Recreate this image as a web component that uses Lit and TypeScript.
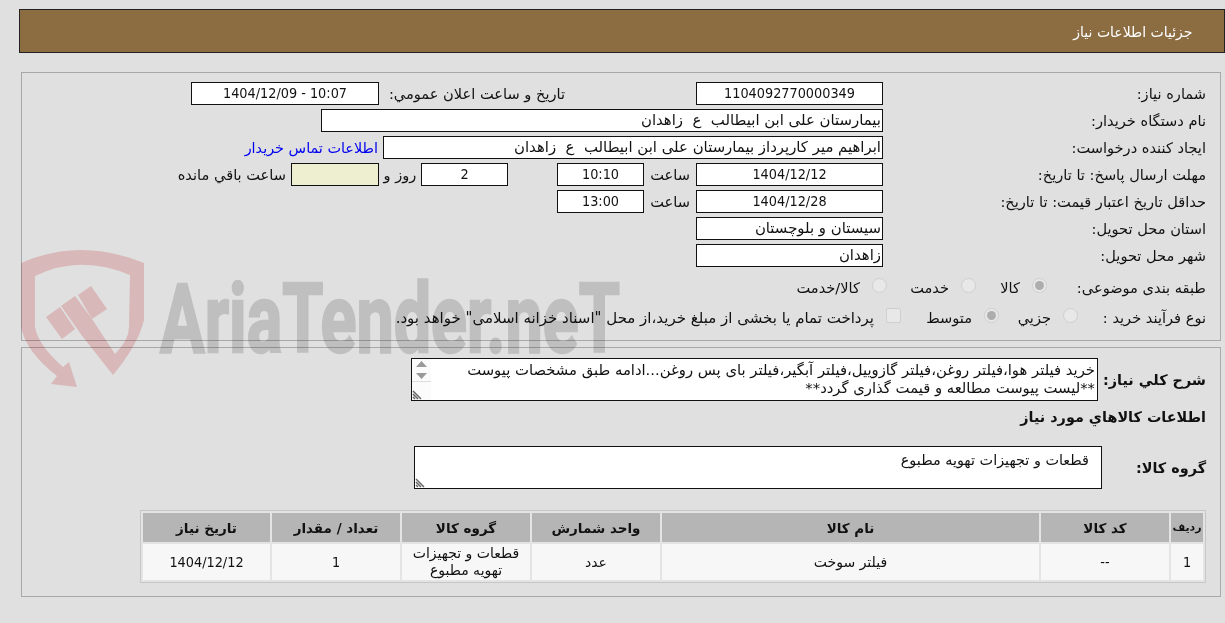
import { LitElement, css, html } from 'lit';
import { customElement } from 'lit/decorators.js';

const COLUMNS = ['ردیف', 'کد کالا', 'نام کالا', 'واحد شمارش', 'گروه کالا', 'تعداد / مقدار', 'تاریخ نیاز'];
const WIDTHS = ['w32', 'w128', 'w377', 'w128', 'w128', 'w128', 'w127'];
const ROW = ['1', '--', 'فیلتر سوخت', 'عدد', 'قطعات و تجهیزات تهویه مطبوع', '1', '1404/12/12'];

@customElement('app-root')
export class AppRoot extends LitElement {

  static styles = css`
    :host {
      display: block;
      position: relative;
      height: 623px;
      overflow: hidden;
      background: #e0e0e0;
      color: #111;
      font: 14.6px "DejaVu Sans", Tahoma, sans-serif;
      direction: rtl;
    }

    .page {
      display: flex;
      flex-direction: column;
      padding: 9px 0 0 0;
    }

    .title {
      display: flex;
      align-items: center;
      height: 40px;
      margin: 0 0.5px 0 19px;
      padding: 2px 31px 0 0;
      background: #8c6d42;
      border: 1px solid #222;
      color: #fff;
      font-size: 14px;
    }

    .panel {
      box-sizing: border-box;
      width: 1200px;
      margin-right: 4px;
      border: 1px solid #a8a8a8;
    }

    .info {
      display: flex;
      flex-direction: column;
      gap: 4px;
      height: 269px;
      margin-top: 19px;
      padding: 9px 14px 0 0;
    }

    .needs {
      height: 250px;
      margin-top: 6px;
      padding: 10px 14px 0 0;
    }

    .row {
      display: flex;
      align-items: center;
      height: 23px;
      white-space: nowrap;
    }

    .lbl { width: 323px; }

    .box {
      box-sizing: border-box;
      height: 23px;
      line-height: 21px;
      background: #fff;
      border: 1px solid #111;
      text-align: center;
      white-space: pre;
      overflow: hidden;
    }

    .box.start {
      padding-right: 1px;
      text-align: right;
      font-size: 14.9px;
    }

    .num {
      font-size: 14.3px;
      font-stretch: condensed;
    }

    .w87 { width: 87px; }
    .w88 { width: 88px; }
    .w187 { width: 187px; }
    .w188 { width: 188px; }
    .w500 { width: 500px; }
    .w562 { width: 562px; }

    .sp131 { width: 131px; }
    .sp49 { width: 49px; }
    .pub { width: 186px; }
    .unit { width: 52px; text-align: center; }
    .days { width: 42px; text-align: center; }
    .after { margin-right: 5px; }

    .link {
      margin-right: 5px;
      color: #0000f0;
      font-size: 14.4px;
      text-decoration: none;
    }

    .remain { background: #eeeed1; }

    .choice { margin-top: 5px; }
    .choice + .choice { margin-top: 3px; }
    .l159 { width: 159px; }
    .l128 { width: 128px; }

    .opt {
      display: flex;
      align-items: center;
      gap: 12px;
    }

    .o71 { width: 71px; }
    .o89 { width: 89px; }
    .o79 { width: 79px; }
    .o98 { width: 98px; }
    .pay { font-size: 15px; }

    .radio, .check {
      flex: none;
      box-sizing: border-box;
      width: 15px;
      height: 15px;
      margin-top: -4px;
      background: #e8e8e8;
      border: 1px solid #cfcfcf;
    }

    .radio {
      display: flex;
      align-items: center;
      justify-content: center;
      border-radius: 50%;
    }

    .radio.on::after {
      content: '';
      width: 9px;
      height: 9px;
      border-radius: 50%;
      background: #adadad;
    }

    .check { border-radius: 2px; }

    .head {
      font-size: 14.4px;
      font-weight: bold;
    }

    .area-row {
      display: flex;
      align-items: center;
      height: 43px;
    }

    .l108 { width: 108px; }
    .l104 { width: 104px; }

    .area {
      position: relative;
      box-sizing: border-box;
      height: 43px;
      background: #fff;
      border: 1px solid #111;
    }

    .area.desc {
      width: 687px;
      padding: 2px 2px 0 0;
      font-size: 14.8px;
      line-height: 18px;
    }

    .area.group {
      width: 688px;
      padding: 4px 12px 0 0;
      font-size: 14.4px;
      line-height: 18px;
    }

    .scroll {
      position: absolute;
      left: 0;
      top: 0;
      bottom: 0;
      width: 19px;
      background: #fbfbfb;
    }

    .scroll svg, .grip {
      position: absolute;
      left: 0;
      display: block;
    }

    .grip { bottom: 0; }

    .section {
      height: 23px;
      margin: 5px 0 17px;
      line-height: 23px;
    }

    table {
      width: 1065px;
      margin-top: 21px;
      table-layout: fixed;
      border-collapse: separate;
      border-spacing: 2px;
      background: #e4e4e4;
      border: 1px solid #c6c6c6;
    }

    th, td {
      padding: 0;
      text-align: center;
      overflow: hidden;
    }

    th {
      height: 29px;
      background: #b5b5b5;
      font-size: 13.5px;
    }

    th:first-child { font-size: 11px; }

    td {
      height: 36px;
      background: #f7f7f7;
      line-height: 17px;
      font-size: 14px;
    }

    .w32 { width: 32px; }
    .w127 { width: 127px; }
    .w128 { width: 128px; }
    .w377 { width: 377px; }

    .mark {
      position: absolute;
      left: 0;
      top: 230px;
      mix-blend-mode: multiply;
      pointer-events: none;
    }

    .mark text {
      font-family: Roboto, sans-serif;
      font-weight: bold;
      font-size: 96px;
      fill: #dadada;
      stroke: #dadada;
      stroke-width: 2.5px;
      direction: ltr;
    }
  `;

  _grip () {
    return html`
      <svg class="grip" width="12" height="12" viewBox="0 0 12 12" aria-hidden="true">
        <path d="M1 3 9 11M1 6 6 11M1 9 3 11" stroke="#666" stroke-width="1.5" fill="none" />
      </svg>
    `;
  }

  render () {
    return html`
      <div class="page">
        <div class="title">جزئیات اطلاعات نیاز</div>

        <div class="panel info">
          <div class="row">
            <div class="lbl">شماره نیاز:</div>
            <div class="box w187 num">1104092770000349</div>
            <div class="sp131"></div>
            <div class="pub">تاریخ و ساعت اعلان عمومي:</div>
            <div class="box w188 num" dir="ltr">1404/12/09 - 10:07</div>
          </div>
          <div class="row">
            <div class="lbl">نام دستگاه خریدار:</div>
            <div class="box start w562">بیمارستان علی ابن ابیطالب  ع  زاهدان</div>
          </div>
          <div class="row">
            <div class="lbl">ایجاد کننده درخواست:</div>
            <div class="box start w500">ابراهیم میر کارپرداز بیمارستان علی ابن ابیطالب  ع  زاهدان</div>
            <a class="link" href="#">اطلاعات تماس خریدار</a>
          </div>
          <div class="row">
            <div class="lbl">مهلت ارسال پاسخ: تا تاریخ:</div>
            <div class="box w187 num">1404/12/12</div>
            <div class="unit">ساعت</div>
            <div class="box w87 num">10:10</div>
            <div class="sp49"></div>
            <div class="box w87 num">2</div>
            <div class="days">روز و</div>
            <div class="box w88 remain"></div>
            <div class="after">ساعت باقي مانده</div>
          </div>
          <div class="row">
            <div class="lbl">حداقل تاریخ اعتبار قیمت: تا تاریخ:</div>
            <div class="box w187 num">1404/12/28</div>
            <div class="unit">ساعت</div>
            <div class="box w87 num">13:00</div>
          </div>
          <div class="row">
            <div class="lbl">استان محل تحویل:</div>
            <div class="box start w187">سیستان و بلوچستان</div>
          </div>
          <div class="row">
            <div class="lbl">شهر محل تحویل:</div>
            <div class="box start w187">زاهدان</div>
          </div>
          <div class="row choice">
            <div class="l159">طبقه بندی موضوعی:</div>
            <div class="opt o71"><span class="radio on"></span><span>کالا</span></div>
            <div class="opt o89"><span class="radio"></span><span>خدمت</span></div>
            <div class="opt"><span class="radio"></span><span>کالا/خدمت</span></div>
          </div>
          <div class="row choice">
            <div class="l128">نوع فرآیند خرید :</div>
            <div class="opt o79"><span class="radio"></span><span>جزيي</span></div>
            <div class="opt o98"><span class="radio on"></span><span>متوسط</span></div>
            <div class="opt"><span class="check"></span><span class="pay">پرداخت تمام یا بخشی از مبلغ خرید،از محل "اسناد خزانه اسلامی" خواهد بود.</span></div>
          </div>
        </div>

        <div class="panel needs">
          <div class="area-row">
            <div class="l108 head">شرح کلي نياز:</div>
            <div class="area desc">
              خرید فیلتر هوا،فیلتر روغن،فیلتر گازوییل،فیلتر آبگیر،فیلتر بای پس روغن...ادامه طبق مشخصات پیوست<br />
              **لیست پیوست مطالعه و قیمت گذاری گردد**
              <div class="scroll">
                <svg width="19" height="24" viewBox="0 0 19 24" aria-hidden="true">
                  <path d="M9.500 2 15 8H4Z M4 14H15L9.500 20Z" fill="#999" />
                  <path d="M0 22.500H19" stroke="#ddd" />
                </svg>
                ${this._grip()}
              </div>
            </div>
          </div>
          <div class="section head">اطلاعات کالاهاي مورد نياز</div>
          <div class="area-row">
            <div class="l104 head">گروه کالا:</div>
            <div class="area group">
              قطعات و تجهیزات تهویه مطبوع
              ${this._grip()}
            </div>
          </div>
          <table>
            <thead>
              <tr>${COLUMNS.map((name, i) => html`<th class=${WIDTHS[i]}>${name}</th>`)}</tr>
            </thead>
            <tbody>
              <tr>${ROW.map((value) => html`<td class=${/^[\d/-]+$/.test(value) ? 'num' : ''}>${value}</td>`)}</tr>
            </tbody>
          </table>
        </div>
      </div>

      <svg class="mark" width="640" height="170" viewBox="0 230 640 170" aria-hidden="true">
        <path fill="#f6d2d2" d="M75 296 92 319 115 354Q129 340 129 327L130 275Q80 254 35 276L35 327Q38 345 63 367L69 362 77 387 51 384 57 376Q26 352 21 327L21 263Q80 237 144 263L144 320Q138 345 113 375L83 337 61 306Z" />
        <path fill="#f6d2d2" d="M46 317 60 307 75 329 62 339ZM78 295 91 286 107 309 92 319Z" />
        <text x="160" y="352" textLength="460" lengthAdjust="spacingAndGlyphs">AriaTender.neT</text>
      </svg>
    `;
  }
}
